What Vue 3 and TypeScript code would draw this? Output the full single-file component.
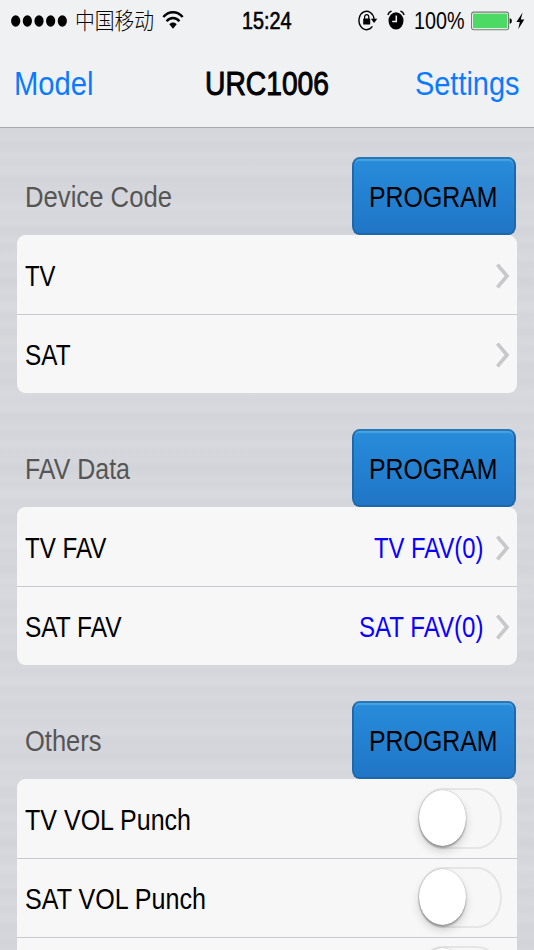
<script setup lang="ts">
import { h, type FunctionalComponent } from 'vue'

interface Row {
  label: string
  width: number
  detail?: string
  detailWidth?: number
  toggle?: boolean
}
interface Section {
  title: string
  width: number
  rows: Row[]
}

/* Condensed text fitted to a given advance width; `end` anchors it at the right edge */
const FitText: FunctionalComponent<{ text: string; w: number; size: number; end?: boolean }> = (props) =>
  h('svg', { width: props.w, height: 40, class: 'fit' }, [
    h(
      'text',
      {
        x: props.end ? props.w : 0,
        y: 30,
        'text-anchor': props.end ? 'end' : 'start',
        'font-size': props.size,
        textLength: props.w,
        lengthAdjust: 'spacingAndGlyphs',
        fill: 'currentColor',
      },
      props.text,
    ),
  ])
FitText.props = { text: String, w: Number, size: Number, end: Boolean }

const sections: Section[] = [
  {
    title: 'Device Code',
    width: 147,
    rows: [
      { label: 'TV', width: 30.5 },
      { label: 'SAT', width: 45.5 },
    ],
  },
  {
    title: 'FAV Data',
    width: 105,
    rows: [
      { label: 'TV FAV', width: 81.5, detail: 'TV FAV(0)', detailWidth: 109.5 },
      { label: 'SAT FAV', width: 96.5, detail: 'SAT FAV(0)', detailWidth: 124.5 },
    ],
  },
  {
    title: 'Others',
    width: 76.5,
    rows: [
      { label: 'TV VOL Punch', width: 166, toggle: true },
      { label: 'SAT VOL Punch', width: 181, toggle: true },
      { label: '', width: 1, toggle: true },
    ],
  },
]
</script>

<template>
  <div class="screen">
    <header class="top">
      <div class="status">
        <div class="side">
          <svg class="dots" width="56" height="12" viewBox="0 0 56 12">
            <ellipse v-for="i in 5" :key="i" :cx="4.7 + (i - 1) * 11.65" cy="6" rx="4.6" ry="5.7" />
          </svg>
          <FitText class="carrier" text="中国移动" :w="79" :size="22.5" />
          <svg class="wifi" width="22" height="20" viewBox="0 0 22 20">
            <g fill="none" stroke="#000" stroke-width="2.4">
              <path d="M1.3 7.1C6.7 .6 15.3 .6 20.7 7.1" />
              <path d="M4.6 11.2C8.1 6.9 13.9 6.9 17.4 11.2" />
            </g>
            <path d="M7.3 14.3C9.4 11.9 12.6 11.9 14.7 14.3L11 18.7Z" />
          </svg>
        </div>
        <FitText class="clock" text="15:24" :w="49.5" :size="23" />
        <div class="side end">
          <svg class="lock" width="20" height="22" viewBox="0 0 20 22">
            <path d="M14.4 17.4A7.6 9.2 0 1 1 16.1 10.2" fill="none" stroke="#000" stroke-width="1.4" />
            <path d="M12.9 9.8H19.3L16.1 14Z" />
            <rect x="5.2" y="9.5" width="7" height="6" rx=".5" />
            <path d="M6.6 10V8.2Q6.6 5.7 8.7 5.7T10.8 8.2V10" fill="none" stroke="#000" stroke-width="1.2" />
          </svg>
          <svg class="alarm" width="18" height="20" viewBox="0 0 18 20">
            <ellipse cx="9" cy="10.8" rx="7.5" ry="8.6" />
            <path d="M.9 5Q1.7 1.9 4.6 1.2M17.1 5Q16.3 1.9 13.4 1.2" fill="none" stroke="#000" stroke-width="1.3" />
            <path d="M9.3 5.4V11.6H5.2" fill="none" stroke="#f0f1f3" stroke-width="1.5" />
          </svg>
          <FitText class="percent" text="100%" :w="50.5" :size="23" />
          <svg class="battery" width="56" height="20" viewBox="0 0 56 20">
            <rect x=".6" y="1.1" width="37" height="17.6" rx="2.2" fill="#fff" stroke="#777" stroke-width="1.1" />
            <rect x="2" y="2.6" width="34.2" height="14.6" rx=".8" fill="#4cd964" />
            <path d="M38.7 7.2Q40.9 7.5 40.9 9.9T38.7 12.8Z" />
            <path d="M51.6 1.6L45.4 11H48.8L47.2 18.2L53.3 8.6H49.8Z" />
          </svg>
        </div>
      </div>
      <nav class="nav">
        <FitText class="link" text="Model" :w="79.5" :size="34" />
        <FitText class="title" text="URC1006" :w="124" :size="33.5" />
        <FitText class="link" text="Settings" :w="104.5" :size="34" end />
      </nav>
    </header>

    <main class="content">
      <section v-for="s in sections" :key="s.title" class="section">
        <div class="heading">
          <FitText class="name" :text="s.title" :w="s.width" :size="30" />
          <button class="program" type="button">
            <FitText text="PROGRAM" :w="128.5" :size="30" />
          </button>
        </div>
        <div class="card">
          <div v-for="(r, i) in s.rows" :key="i" class="row">
            <FitText class="label" :text="r.label" :w="r.width" :size="30" />
            <div v-if="r.toggle" class="toggle"><div class="knob"></div></div>
            <template v-else>
              <FitText v-if="r.detail" class="detail" :text="r.detail" :w="r.detailWidth ?? 0" :size="30" end />
              <svg class="chevron" width="14" height="26" viewBox="0 0 14 26">
                <path d="M1.4 1.6L11 13L1.4 24.4" fill="none" stroke="#c7c7cc" stroke-width="3.7" />
              </svg>
            </template>
          </div>
        </div>
      </section>
    </main>
  </div>
</template>

<style>
body {
  margin: 0;
  overflow: hidden;
}
</style>

<style scoped>
.screen {
  width: 534px;
  height: 950px;
  overflow: hidden;
  display: flex;
  flex-direction: column;
  font-family: 'Liberation Sans', 'Noto Sans CJK SC', sans-serif;
  color: #000;
  background:
    repeating-linear-gradient(180deg, rgba(255, 255, 255, 0.05) 0 3px, rgba(0, 0, 0, 0.004) 7px 10px, rgba(255, 255, 255, 0.04) 17px),
    repeating-linear-gradient(180deg, #d3d4d9 0, #d7d8dd 22px, #d4d5da 45px, #d6d7dc 71px, #d3d4d9 94px);
}
.fit {
  display: block;
  flex: none;
  overflow: visible;
}
.top {
  box-sizing: border-box;
  flex: none;
  height: 127.5px;
  background: #f0f1f3;
  border-bottom: 1px solid #a8a9ac;
}
.status {
  height: 40px;
  display: grid;
  grid-template-columns: 242px 49.5px 1fr;
  align-items: start;
}
.side {
  display: flex;
  align-items: flex-start;
  padding-left: 11px;
}
.end {
  padding: 0 10.5px 0 0;
  justify-content: flex-end;
}
.dots {
  margin: 15px 7.5px 0 0;
}
.carrier {
  margin-top: -1.5px;
  font-family: 'Noto Sans CJK SC', sans-serif;
  font-weight: 300;
}
.wifi {
  margin: 9.5px 0 0 8px;
}
.clock,
.title {
  stroke: currentColor;
  stroke-width: 0.6px;
}
.clock {
  margin-top: -1px;
}
.lock {
  margin: 9px 9px 0 0;
}
.alarm {
  margin: 10px 8.5px 0 0;
}
.percent {
  margin: -1px 6.5px 0 0;
}
.battery {
  margin: 10.5px -3px 0 0;
}
.nav {
  display: flex;
  justify-content: space-between;
  padding: 25px 14.5px 0 13.5px;
}
.title {
  margin-left: 26px;
  stroke-width: 1px;
}
.link {
  color: #0a7aff;
}
.content {
  padding: 29.4px 17px 0;
}
.section {
  margin-bottom: 35.5px;
}
.heading {
  height: 78.5px;
  display: flex;
  justify-content: space-between;
  padding: 0 1.5px 0 8px;
}
.name {
  color: #555;
  margin-top: 20px;
}
.program {
  box-sizing: border-box;
  width: 163.5px;
  height: 78.5px;
  display: flex;
  align-items: flex-start;
  padding: 18px 0 0 14.6px;
  border: 2px solid #1c68ab;
  border-top-color: #2878b5;
  border-radius: 7px / 9px;
  background: linear-gradient(#288cdb, #2075c6);
  box-shadow: inset 0 2px 1px rgba(112, 190, 232, 0.45);
  font-family: inherit;
  color: #000;
}
.card {
  border-radius: 8px / 9px;
  overflow: hidden;
  background: #f7f7f8;
}
.row {
  box-sizing: border-box;
  height: 79px;
  display: flex;
  align-items: flex-start;
  padding: 0 8px;
}
.row + .row {
  border-top: 1px solid #c8c8cd;
}
.row + .row > * {
  transform: translateY(-1px);
}
.label {
  margin: 20.6px auto 0 0;
}
.detail {
  color: #0a00ff;
  margin: 20.6px 12.5px 0 0;
}
.chevron {
  margin-top: 27.6px;
  margin-right: -0.5px;
}
.toggle {
  box-sizing: border-box;
  width: 84px;
  height: 61px;
  margin: 8.5px 7.5px 0 0;
  border: 2.5px solid #e5e5e6;
  border-radius: 25px / 30.5px;
}
.knob {
  width: 47px;
  height: 56px;
  margin-left: -1px;
  border-radius: 50%;
  background: #fff;
  box-shadow:
    0 0 1px rgba(0, 0, 0, 0.35),
    0 2px 2px rgba(0, 0, 0, 0.28),
    0 5px 10px rgba(0, 0, 0, 0.16);
}
</style>
